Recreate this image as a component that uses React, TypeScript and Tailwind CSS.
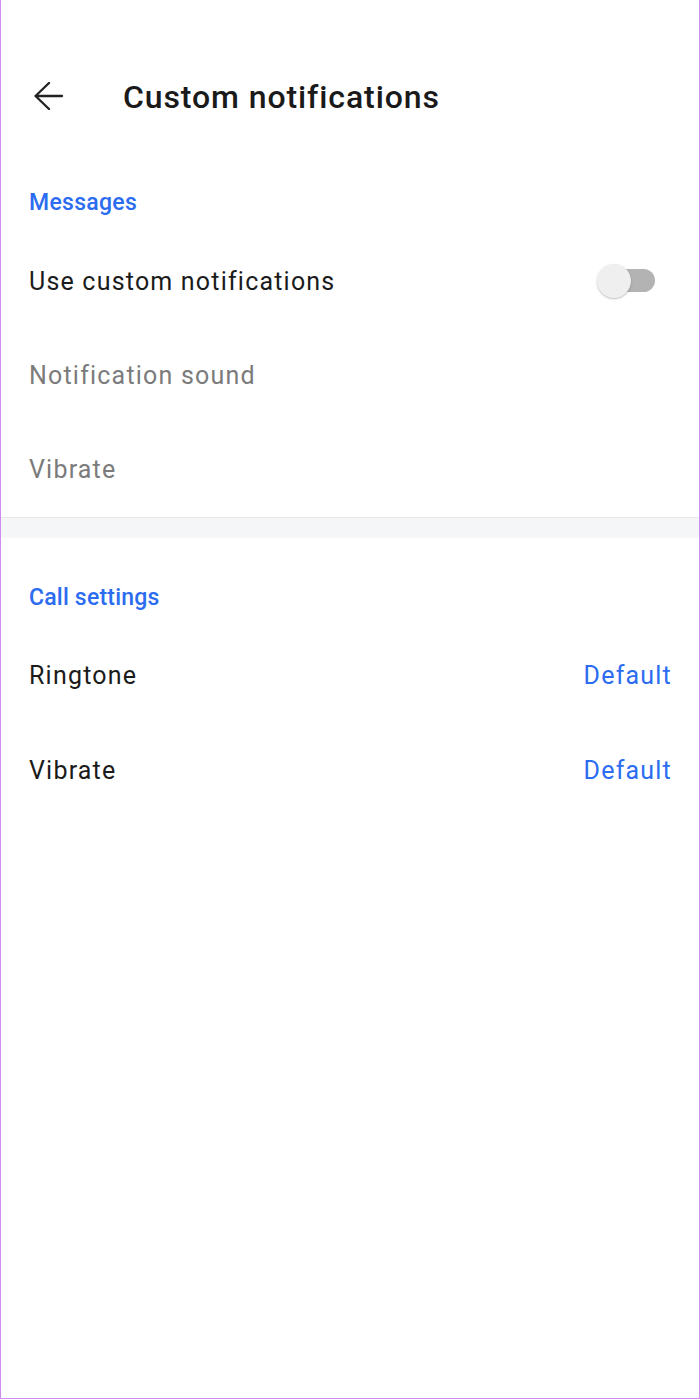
import React from "react"

const messageRows = [
  { label: "Use custom notifications", toggle: true, muted: false },
  { label: "Notification sound", toggle: false, muted: true },
  { label: "Vibrate", toggle: false, muted: true },
]

const callRows = [
  { label: "Ringtone", value: "Default" },
  { label: "Vibrate", value: "Default" },
]

function BackArrow() {
  return (
    <svg width="30" height="28" viewBox="0 0 30 28" fill="none" className="text-[#222]">
      <path d="M28 14H1.5M15 1L1.5 14L15 27" stroke="currentColor" strokeWidth="2.3" strokeLinecap="round" strokeLinejoin="round" />
    </svg>
  )
}

function Toggle() {
  return (
    <div className="relative w-[58px] h-[36px] mr-[17px]">
      <div className="absolute left-[3px] top-[5px] w-[55px] h-[23px] rounded-full bg-[#b3b3b3]" />
      <div className="absolute left-0 top-0 w-[34px] h-[34px] rounded-full bg-[#efefef] shadow-[0_1px_2px_rgba(0,0,0,0.25)]" />
    </div>
  )
}

export default function App() {
  return (
    <div
      className="w-[700px] h-[1399px] bg-white border-x border-b border-[#d08bf0] flex flex-col"
      style={{ fontFamily: "Roboto, 'Noto Sans', sans-serif" }}
    >
      {/* Header */}
      <header className="mt-[61px] h-[70px] flex items-center pl-[33px]">
        <BackArrow />
        <h1 className="ml-[59px] mt-[1px] text-[32px] tracking-[0.9px] font-medium text-[#1a1a1a]">Custom notifications</h1>
      </header>

      {/* Messages */}
      <div className="mt-[59px] h-[26px] leading-[26px] pl-[28px] text-[23px] tracking-[0.3px] font-medium text-[#2b6cf0]">Messages</div>
      <div className="mt-[19px] flex flex-col">
        {messageRows.map((row) => (
          <div key={row.label} className="h-[94px] flex items-center justify-between pl-[28px] pr-[27px]">
            <span className={`text-[25px] tracking-[1.2px] ${row.muted ? "text-[#7b7b7b]" : "text-[#1b1b1b]"}`}>{row.label}</span>
            {row.toggle && <Toggle />}
          </div>
        ))}
      </div>

      <div className="h-[21px] border-t border-[#e6e8ea] bg-[#f5f6f7]" />

      {/* Call settings */}
      <div className="mt-[47px] h-[26px] leading-[26px] pl-[28px] text-[23px] tracking-[0.2px] font-medium text-[#2b6cf0]">Call settings</div>
      <div className="mt-[17px] flex flex-col">
        {callRows.map((row) => (
          <div key={row.label} className="h-[95px] flex items-center justify-between pl-[28px] pr-[27px]">
            <span className="text-[25px] tracking-[1.2px] text-[#1b1b1b]">{row.label}</span>
            <span className="text-[25px] tracking-[1.2px] text-[#2b6cf0]">{row.value}</span>
          </div>
        ))}
      </div>
    </div>
  )
}
